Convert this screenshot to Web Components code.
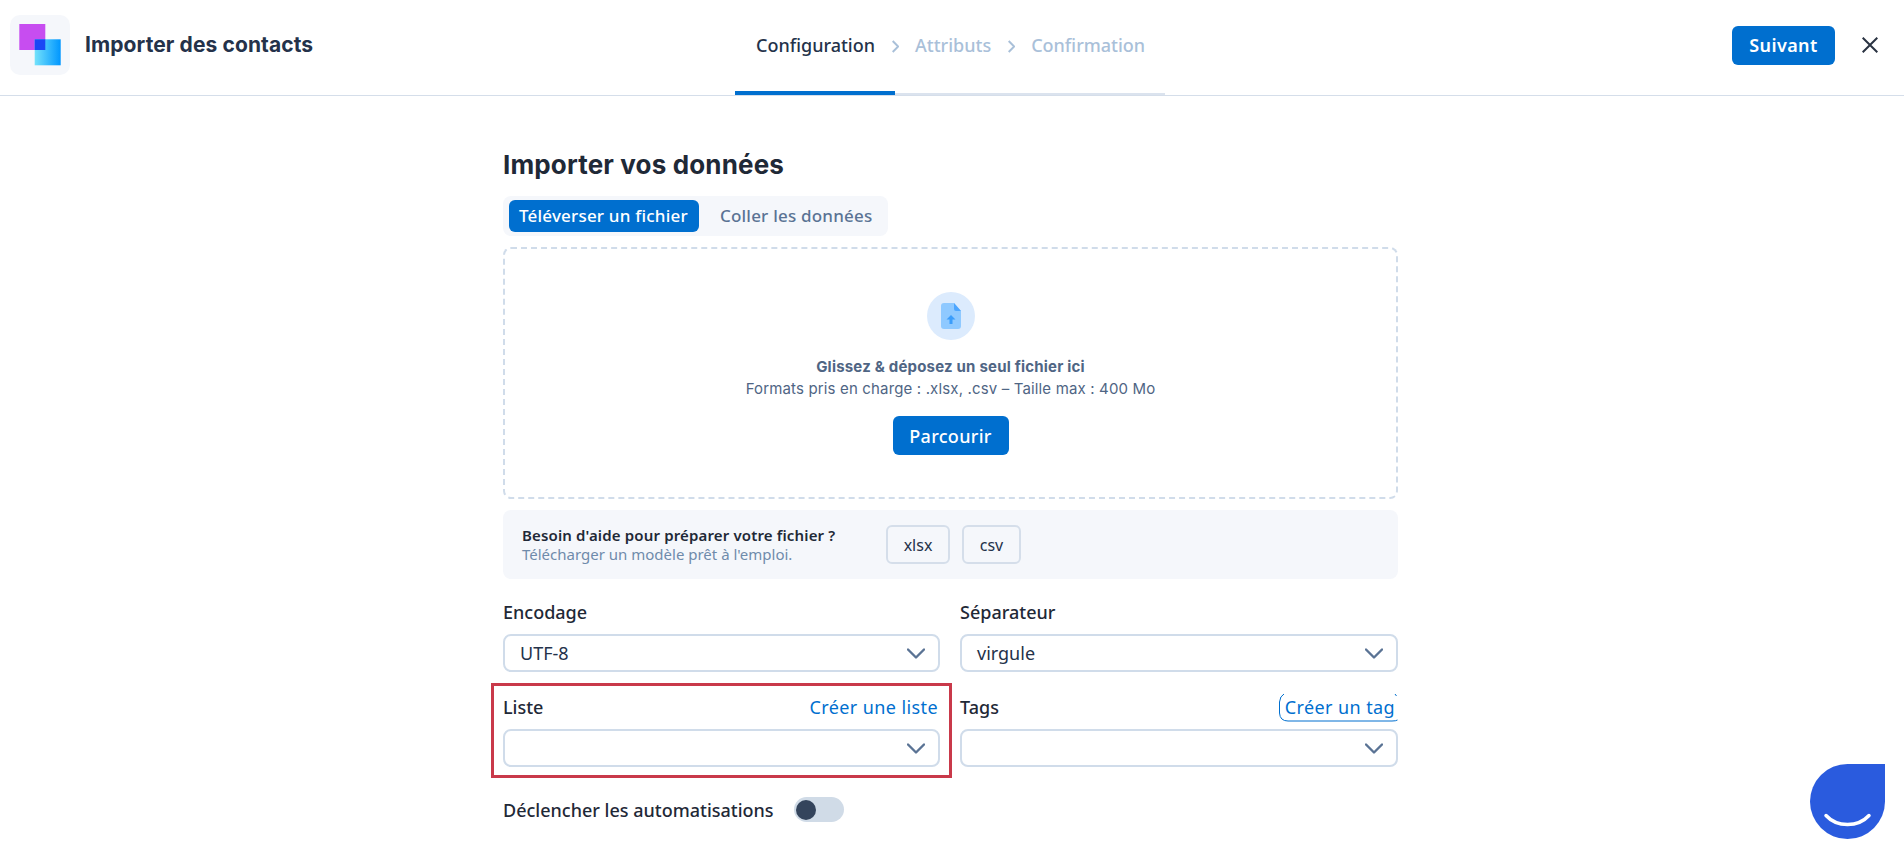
<!DOCTYPE html>
<html lang="fr">
<head>
<meta charset="utf-8">
<title>Importer des contacts</title>
<style>
  html, body { margin: 0; padding: 0; background: #fff; }
  body { font-family: "Noto Sans", sans-serif; color: #1f2937; height: 854px; overflow: hidden; }
</style>
</head>
<body>
<import-app></import-app>
<script>
const BLUE = '#006fcf';
const CHEVRON = `<svg width="18" height="11" viewBox="0 0 18 11" fill="none"><path d="M1 1.5l8 8 8-8" stroke="#5a7394" stroke-width="2.400" stroke-linecap="round" stroke-linejoin="round"/></svg>`;
const STEP_ARROW = `<svg width="7" height="13" viewBox="0 0 7 13" fill="none"><path d="M.7 1l5.500 5.500L.7 12" stroke="#a9c0d9" stroke-width="2"/></svg>`;

customElements.define('logo-mark', class extends HTMLElement {
  constructor() {
    super();
    this.attachShadow({ mode: 'open' }).innerHTML = `
      <style>
      :host { display: block; width: 60px; height: 60px; }
      svg { display: block; }
      </style>
      <svg width="60" height="60" viewBox="0 0 60 60">
        <defs>
          <linearGradient id="g" x1="0" x2="1" y1="0" y2="0">
            <stop offset="0" stop-color="#74e2fb"/>
            <stop offset="1" stop-color="#0096ff"/>
          </linearGradient>
        </defs>
        <rect width="60" height="60" rx="10" fill="#f5f7fb"/>
        <rect x="9.300" y="9" width="26" height="26" fill="#c74df0"/>
        <rect x="24.700" y="24.300" width="26" height="26" fill="url(#g)"/>
        <rect x="24.700" y="24.300" width="10.600" height="10.700" fill="#1a47f5"/>
      </svg>`;
  }
});

customElements.define('step-nav', class extends HTMLElement {
  constructor() {
    super();
    this.attachShadow({ mode: 'open' }).innerHTML = `
      <style>
      :host { display: flex; flex-direction: column; width: 430px; height: 95px; box-sizing: border-box; }
      .steps { flex: 1; display: flex; align-items: center; padding: 0 0 1px 21px; font: 500 18px/24px "Noto Sans", sans-serif; color: #a9c0d9; }
      .steps b { font-weight: 500; color: #24324a; }
      .steps svg { margin: 2px 16px 0 17px; flex: none; }
      .bar { height: 4px; display: flex; align-items: flex-end; }
      .bar i { display: block; }
      .bar .on { width: 160px; height: 4px; background: ${BLUE}; }
      .bar .off { flex: 1; height: 2px; background: #dbe3ee; }
      </style>
      <div class="steps">
        <b>Configuration</b>${STEP_ARROW}<span>Attributs</span>${STEP_ARROW}<span>Confirmation</span>
      </div>
      <div class="bar"><i class="on"></i><i class="off"></i></div>`;
  }
});

customElements.define('app-button', class extends HTMLElement {
  constructor() {
    super();
    this.attachShadow({ mode: 'open' }).innerHTML = `
      <style>
      :host { display: inline-flex; align-items: center; justify-content: center; background: ${BLUE}; color: #fff; border-radius: 6px; font: 500 18px/24px "Noto Sans", sans-serif; letter-spacing: .3px; box-sizing: border-box; }
      </style>
      <slot></slot>`;
  }
});

customElements.define('top-bar', class extends HTMLElement {
  constructor() {
    super();
    this.attachShadow({ mode: 'open' }).innerHTML = `
      <style>
      :host { display: grid; grid-template-columns: 735px 430px 1fr; height: 96px; box-sizing: border-box; border-bottom: 1px solid #d5deea; }
      .left { display: flex; align-items: center; gap: 15px; padding: 0 0 5px 10px; }
      .title { font: 700 21px/28px Inter, sans-serif; color: #24324a; letter-spacing: .1px; }
      .right { display: flex; align-items: center; justify-content: flex-end; gap: 27px; padding: 0 26px 5px 0; }
      app-button { width: 103px; height: 39px; font-weight: 600; letter-spacing: .4px; }
      svg { display: block; }
      </style>
      <div class="left"><logo-mark></logo-mark><span class="title">Importer des contacts</span></div>
      <step-nav></step-nav>
      <div class="right">
        <app-button>Suivant</app-button>
        <svg width="16" height="16" viewBox="0 0 16 16" fill="none"><path d="M.7.7l14.600 14.600M15.300.7L.7 15.300" stroke="#2a3342" stroke-width="2"/></svg>
      </div>`;
  }
});

customElements.define('drop-zone', class extends HTMLElement {
  constructor() {
    super();
    this.attachShadow({ mode: 'open' }).innerHTML = `
      <style>
      :host { display: flex; flex-direction: column; align-items: center; height: 252px; box-sizing: border-box; border: 2px dashed #d0dcea; border-radius: 8px; padding-top: 43px; color: #4f6584; }
      .circle { width: 48px; height: 48px; border-radius: 50%; background: #dcebfd; display: flex; align-items: center; justify-content: center; }
      .t1 { margin-top: 16px; font: 700 15px/22px Inter, sans-serif; letter-spacing: .2px; }
      .t2 { font: 400 15px/22px Inter, sans-serif; letter-spacing: .15px; }
      app-button { width: 116px; height: 39px; margin-top: 16px; }
      </style>
      <div class="circle">
        <svg width="20" height="26" viewBox="0 0 20 26">
          <path d="M3 0h10l7 8v15a3 3 0 0 1-3 3H3a3 3 0 0 1-3-3V3a3 3 0 0 1 3-3z" fill="#8fc9ff"/>
          <path d="M13 0l7 8h-5a2 2 0 0 1-2-2z" fill="#4da6ff"/>
          <path d="M10 12l4.500 4.500H11.500V21h-3v-4.500H5.500z" fill="#3b9dfb"/>
        </svg>
      </div>
      <div class="t1">Glissez &amp; déposez un seul fichier ici</div>
      <div class="t2">Formats pris en charge : .xlsx, .csv – Taille max : 400 Mo</div>
      <app-button>Parcourir</app-button>`;
  }
});

customElements.define('help-box', class extends HTMLElement {
  constructor() {
    super();
    this.attachShadow({ mode: 'open' }).innerHTML = `
      <style>
      :host { display: flex; align-items: center; height: 69px; box-sizing: border-box; background: #f5f7fb; border-radius: 8px; padding-left: 19px; }
      .text { width: 364px; padding-bottom: 1px; }
      .a { font: 600 15px/19px "Noto Sans", sans-serif; color: #1f2937; letter-spacing: .15px; }
      .b { font: 400 15px/18px "Noto Sans", sans-serif; color: #6f8bab; }
      .dl { height: 39px; box-sizing: border-box; border: 2px solid #d5deea; border-radius: 6px; display: flex; align-items: center; justify-content: center; font: 400 16px/20px "Noto Sans", sans-serif; color: #24324a; margin-right: 12px; }
      </style>
      <div class="text">
        <div class="a">Besoin d'aide pour préparer votre fichier ?</div>
        <div class="b">Télécharger un modèle prêt à l'emploi.</div>
      </div>
      <div class="dl" style="width:64px">xlsx</div>
      <div class="dl" style="width:59px">csv</div>`;
  }
});

customElements.define('select-field', class extends HTMLElement {
  constructor() {
    super();
    const action = this.getAttribute('action');
    const ring = this.hasAttribute('focus-ring');
    this.attachShadow({ mode: 'open' }).innerHTML = `
      <style>
      :host { display: block; }
      .head { display: flex; justify-content: space-between; align-items: center; height: 42px; padding-bottom: 3px; box-sizing: border-box; }
      label { font: 500 18px/24px "Noto Sans", sans-serif; color: #1f2937; }
      a { position: relative; font: 400 18px/24px "Noto Sans", sans-serif; color: ${BLUE}; letter-spacing: .4px; padding-right: 2px; }
      a.ring { padding-right: 3px; }
      /* the focus ring is cut off at the top and on the right in the app */
      a svg { position: absolute; right: 0; top: -2px; }
      .box { height: 38px; box-sizing: border-box; border: 2px solid #d0dcea; border-radius: 8px; display: flex; align-items: center; justify-content: space-between; padding: 0 13px 0 15px; font: 400 18px/24px "Noto Sans", sans-serif; color: #24324a; }
      </style>
      <div class="head"><label>${this.getAttribute('label')}</label>${action ? `<a class="${ring ? 'ring' : ''}">${action}${ring ? `<svg width="119" height="29" viewBox="0 0 119 29" fill="none"><path d="M5 1Q1 3 .5 9v11q.5 8 8.500 8h104q4 0 5.500-1M116 1l1.500 2" stroke="${BLUE}"/></svg>` : ''}</a>` : ''}</div>
      <div class="box"><span>${this.getAttribute('value') || ''}</span>${CHEVRON}</div>`;
  }
});

customElements.define('toggle-row', class extends HTMLElement {
  constructor() {
    super();
    this.attachShadow({ mode: 'open' }).innerHTML = `
      <style>
      :host { display: flex; align-items: center; gap: 20px; height: 25px; font: 500 18px/24px "Noto Sans", sans-serif; color: #1f2937; }
      .sw { width: 50px; height: 25px; border-radius: 13px; background: #d0dbe7; display: flex; align-items: center; padding-left: 2px; box-sizing: border-box; }
      .sw i { width: 20px; height: 20px; border-radius: 50%; background: #34445c; }
      </style>
      <slot></slot><div class="sw"><i></i></div>`;
  }
});

customElements.define('chat-bubble', class extends HTMLElement {
  constructor() {
    super();
    this.attachShadow({ mode: 'open' }).innerHTML = `
      <style>
      :host { position: absolute; left: 1810px; top: 764px; width: 75px; height: 75px; }
      svg { display: block; }
      </style>
      <svg width="75" height="75" viewBox="0 0 75 75">
        <path d="M37.500 0H75v37.500A37.500 37.500 0 1 1 37.500 0z" fill="#2a5bde"/>
        <path d="M16 51.500c11 12 32 12 43 0" fill="none" stroke="#fff" stroke-width="3.500" stroke-linecap="round"/>
      </svg>`;
  }
});

customElements.define('import-app', class extends HTMLElement {
  constructor() {
    super();
    this.attachShadow({ mode: 'open' }).innerHTML = `
      <style>
      :host { display: block; position: relative; height: 854px; }
      main { width: 895px; margin-left: 503px; padding-top: 51px; position: relative; }
      h2 { margin: 0; font: 700 26px/36px Inter, sans-serif; color: #1f2937; letter-spacing: .15px; }
      .tabs { display: flex; width: fit-content; align-items: center; margin-top: 13px; height: 40px; padding: 0 16px 0 6px; box-sizing: border-box; background: #f5f7fb; border-radius: 8px; font: 500 17px/24px "Noto Sans", sans-serif; letter-spacing: .2px; color: #5a7394; gap: 21px; }
      .tabs .on { background: ${BLUE}; color: #fff; border-radius: 6px; padding: 4px 10px; width: 190px; box-sizing: border-box; white-space: nowrap; }
      drop-zone { margin-top: 11px; }
      help-box { margin-top: 11px; }
      .grid { display: grid; grid-template-columns: 437px 438px; column-gap: 20px; margin-top: 13px; }
      .grid .row2 { margin-top: 15px; }
      toggle-row { margin-top: 30px; }
      .mark { position: absolute; left: -12px; top: 587px; width: 461px; height: 95px; box-sizing: border-box; border: 3px solid #c9394a; }
      </style>
      <top-bar></top-bar>
      <main>
        <h2>Importer vos données</h2>
        <div class="tabs"><span class="on">Téléverser un fichier</span><span>Coller les données</span></div>
        <drop-zone></drop-zone>
        <help-box></help-box>
        <div class="grid">
          <select-field label="Encodage" value="UTF-8"></select-field>
          <select-field label="Séparateur" value="virgule"></select-field>
          <select-field class="row2" label="Liste" action="Créer une liste"></select-field>
          <select-field class="row2" label="Tags" action="Créer un tag" focus-ring></select-field>
        </div>
        <toggle-row>Déclencher les automatisations</toggle-row>
        <div class="mark"></div>
      </main>
      <chat-bubble></chat-bubble>`;
  }
});
</script>
</body>
</html>
